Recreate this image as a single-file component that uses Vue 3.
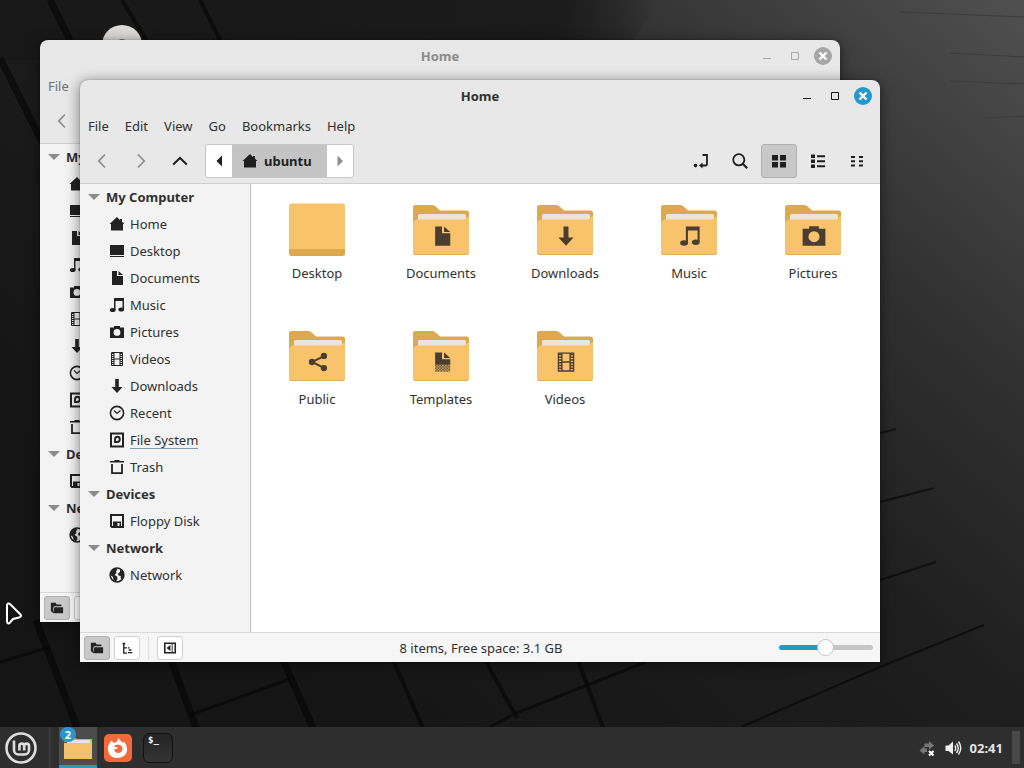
<script setup>
import { ref } from 'vue';

// open file manager windows, the last one has the focus
const windows = ref([
    { id: 1, top: 40, left: 40, right: 184, bottom: 146, active: false },
    { id: 2, top: 80, left: 80, right: 144, bottom: 106, active: true }
]);

const zoomLevel = ref(49);

const menus = ['File', 'Edit', 'View', 'Go', 'Bookmarks', 'Help'];

const places = [
    {
        title: 'My Computer',
        items: [
            { label: 'Home', icon: 'home' },
            { label: 'Desktop', icon: 'desktop' },
            { label: 'Documents', icon: 'document' },
            { label: 'Music', icon: 'music' },
            { label: 'Pictures', icon: 'camera' },
            { label: 'Videos', icon: 'film' },
            { label: 'Downloads', icon: 'download' },
            { label: 'Recent', icon: 'clock' },
            { label: 'File System', icon: 'disk', usage: true },
            { label: 'Trash', icon: 'trash' }
        ]
    },
    { title: 'Devices', items: [{ label: 'Floppy Disk', icon: 'floppy' }] },
    { title: 'Network', items: [{ label: 'Network', icon: 'globe' }] }
];

const folders = [
    { label: 'Desktop' },
    { label: 'Documents', emblem: 'document' },
    { label: 'Downloads', emblem: 'download' },
    { label: 'Music', emblem: 'music' },
    { label: 'Pictures', emblem: 'camera' },
    { label: 'Public', emblem: 'share' },
    { label: 'Templates', emblem: 'template' },
    { label: 'Videos', emblem: 'film' }
];

const viewButtons = [
    { icon: 'location', label: 'Toggle location entry' },
    { icon: 'search', label: 'Search' },
    { icon: 'grid', label: 'Icon view', on: true },
    { icon: 'list', label: 'List view' },
    { icon: 'compact', label: 'Compact view' }
];

// symbolic icons, all on a 16x16 grid
const icons = {
    home: '<path d="M8 1 0.5 8H2v6.5h12V8h1.500L13 5.700V3h-2v.9z"/>',
    desktop: '<path d="M1 2h14v10H1zM1 13h14v1H1z"/>',
    document: '<path d="M3 1h5v5h6v9H3z"/><path d="M9.500 1 14 5H9.500z"/>',
    music: '<path d="M5 1h10v11.500h-1.500V4H6.500v9H5z"/><ellipse cx="3.700" cy="13" rx="2.900" ry="2"/><ellipse cx="12.200" cy="12.500" rx="2.800" ry="2"/>',
    camera: '<path fill-rule="evenodd" d="M5 2h6v1.500h4V14H1V3.500h4zM8 5a3.400 3.400 0 1 0 0 6.800A3.400 3.400 0 0 0 8 5z"/>',
    film: '<path fill="none" stroke="currentColor" d="M2.500 1.500h11v13h-11zM5 1.500v13M11 1.500v13M5 8h6"/><path fill="none" stroke="currentColor" stroke-dasharray="1 1" stroke-width="2" d="M4 2v12M12 2v12"/>',
    download: '<path d="M6.200 1h3.600v8H13.500l-5.500 6-5.500-6h3.700z"/>',
    clock: '<g fill="none" stroke="currentColor"><circle cx="8" cy="8" r="6.600" stroke-width="1.600"/><path stroke-width="1.200" d="m5 5.500 3 3 3.500-3"/></g>',
    disk: '<path fill="none" stroke="currentColor" stroke-width="2" d="M2 1.500h12v13H2z"/><path fill="none" stroke="currentColor" stroke-width="1.900" d="M6 11V7.500C6 5.500 7 4.800 8.300 4.800s2.500 1 2.500 2.500-1.200 2.700-2.600 2.700H6"/>',
    trash: '<path d="M1 2h4.500V1h5v1H15v1.500H1z"/><path fill="none" stroke="currentColor" stroke-width="1.800" d="M3 5v9.200h10V5"/>',
    floppy: '<path fill="none" stroke="currentColor" stroke-width="2" d="M2 2h12v12H3l-1-1z"/><path fill-rule="evenodd" d="M4 8.500h8V15H4zM8.500 10v3.500h2V10z"/>',
    globe: '<circle cx="8" cy="8" r="6.900" fill="none" stroke="currentColor" stroke-width="1.500"/><path d="M2 5 5 1.500 8.500 2 7 4.500 7.500 6 5.500 8 8 9.500 8.500 12 7 14.500 4.500 13 4 10 1.500 8zM11 2l3 3 1 4-2.500 3.500-1-2L12 9 9.500 8.500 9 6.500 11 5z"/>',
    share: '<g fill="none" stroke="currentColor" stroke-width="1.500"><path d="m12.500 3.500-9 4.500 9 4.500"/></g><circle cx="12.500" cy="3.400" r="2.400"/><circle cx="3.400" cy="8" r="2.400"/><circle cx="12.500" cy="12.600" r="2.400"/>',
    template: '<path d="M3 1h5v5h6v4H3z"/><path d="M9.500 1 14 5H9.500z"/><path fill="none" stroke="currentColor" stroke-dasharray=".6 .5" d="M3 10.500h11M3.500 11.500H14M3 12.500h11M3.500 13.500H14M3 14.500h11"/>',
    back: '<path fill="none" stroke="currentColor" stroke-width="1.800" d="M11 1.500 4.800 8l6.200 6.500"/>',
    forward: '<path fill="none" stroke="currentColor" stroke-width="1.800" d="M5 1.500 11.200 8 5 14.500"/>',
    up: '<path fill="none" stroke="currentColor" stroke-width="2" d="M1.200 11.500 8 5l6.800 6.500"/>',
    left: '<path d="M11 2.500v11L5.500 8z"/>',
    right: '<path d="M5.500 2.500v11L11 8z"/>',
    location: '<path fill="none" stroke="currentColor" stroke-width="1.800" d="M9.500 2H14v9a1.500 1.500 0 0 1-1.500 1.500H8"/><path d="M9.500 9.500v6L6 12.500z"/><circle cx="2.500" cy="12.600" r="1.800"/>',
    search: '<g fill="none" stroke="currentColor" stroke-width="1.800"><circle cx="6.800" cy="6.800" r="5.600"/><path d="m10.800 10.800 4.400 4.400" stroke-width="2.200"/></g>',
    grid: '<path d="M1 2h6v5.500H1zM9 2h6v5.500H9zM1 9h6v5.500H1zM9 9h6v5.500H9z"/>',
    list: '<path d="M1 1.500h4v3.500H1zM1 6.500h4V10H1zM1 11.500h4V15H1zM7 2.300h8v2H7zM7 7.200h8v2H7zM7 12.200h8v2H7z"/>',
    compact: '<path d="M2 3h4v2H2zM2 7.200h4v2H2zM2 11.500h4v2H2zM10 3h4v2h-4zM10 7.200h4v2h-4zM10 11.500h4v2h-4z"/>',
    folder: '<path d="M1 2h5.500l1 2H13v2H4.500L3.500 9.500V13H2.500L1 11zM5 7h10v7H3.500z"/>',
    tree: '<path d="M3 2h3v2H5v3h3v1.500H5V13h3v1.500H3.500V4H3z"/><path d="M9 7h2v1.500H9zM9 12.500h5V14H9zM10 9.500h3V11h-3z"/>',
    panel: '<path fill="none" stroke="currentColor" stroke-width="1.800" d="M2 2.500h12v11H2z"/><path d="M8.500 4.500v7L4 8zM10 3h1v10h-1z"/>'
};

const emblemSize = { camera: 26, share: 21 };
</script>

<template>
    <div class="desktop">
        <svg class="wallpaper" viewBox="0 0 1024 768" preserveAspectRatio="none" aria-hidden="true">
            <defs>
                <linearGradient id="wall" x1="0.15" y1="0.75" x2="1" y2="0">
                    <stop offset="0" stop-color="#151515" />
                    <stop offset="0.45" stop-color="#1e1e1e" />
                    <stop offset="0.7" stop-color="#303030" />
                    <stop offset="1" stop-color="#505050" />
                </linearGradient>
                <linearGradient id="wallTop" x1="0" y1="0" x2="1" y2="0">
                    <stop offset="0" stop-color="#181818" />
                    <stop offset="0.85" stop-color="#1b1b1b" />
                    <stop offset="1" stop-color="#1b1b1b" stop-opacity="0" />
                </linearGradient>
            </defs>
            <rect width="1024" height="768" fill="url(#wall)" />
            <path d="M0 0h660l-40 60H0z" fill="url(#wallTop)" />
            <g fill="none" stroke="#060606" stroke-opacity="0.65" stroke-width="7">
                <path d="M50 0 70 40M0 58l45 90M36 620l42 110M171 660l26 70M283 660l31 70" />
                <path stroke-width="4" d="M122 0 146 40M200 0l20 40M393 660l31 70M485 660l32 58M578 660l25 68" />
                <path stroke-width="3" d="m190 715 100-36M490 727l26-14 130-51M0 662l50-15" />
                <path stroke-width="2" d="m741 727 139-60 104-42M880 433l16-4M880 502l54-14M880 580l56-18" />
            </g>
            <path d="M950 53l74 4M900 12l124 5M950 81l74 3M985 118l39-2" fill="none" stroke="#3c3c3c" />
        </svg>

        <svg class="disc" viewBox="0 0 40 40" aria-hidden="true">
            <circle cx="20" cy="20" r="20" fill="#dddcd9" />
            <circle cx="20" cy="20" r="6" fill="#666" />
        </svg>

        <section
            v-for="win in windows"
            :key="win.id"
            class="window"
            :class="{ inactive: !win.active }"
            :style="{ top: win.top + 'px', left: win.left + 'px', right: win.right + 'px', bottom: win.bottom + 'px' }"
        >
            <header class="titlebar">
                <h1 class="title">Home</h1>
                <div class="controls">
                    <button type="button" aria-label="Minimize">
                        <svg viewBox="0 0 20 20"><path d="M6 12.500h8" stroke="currentColor" /></svg>
                    </button>
                    <button type="button" aria-label="Maximize">
                        <svg viewBox="0 0 20 20"><path d="M6.500 6.500h7v7h-7z" fill="none" stroke="currentColor" /></svg>
                    </button>
                    <button type="button" aria-label="Close">
                        <svg viewBox="0 0 20 20">
                            <circle class="close-disc" cx="10" cy="10" r="9" />
                            <path d="m6.500 6.500 7 7m0-7-7 7" stroke="#fff" stroke-width="2.400" />
                        </svg>
                    </button>
                </div>
            </header>

            <!-- the inactive window is covered from here on, apart from its left edge -->
            <nav class="menubar">
                <button v-for="menu in win.active ? menus : menus.slice(0, 1)" :key="menu" type="button">{{ menu }}</button>
            </nav>

            <div class="toolbar">
                <button class="tool dim" type="button" aria-label="Back"><svg viewBox="0 0 16 16" v-html="icons.back"></svg></button>
                <template v-if="win.active">
                    <button class="tool dim" type="button" aria-label="Forward"><svg viewBox="0 0 16 16" v-html="icons.forward"></svg></button>
                    <button class="tool" type="button" aria-label="Up"><svg viewBox="0 0 16 16" v-html="icons.up"></svg></button>
                    <div class="pathbar">
                        <button class="step" type="button" aria-label="Previous"><svg viewBox="0 0 16 16" v-html="icons.left"></svg></button>
                        <button class="crumb" type="button">
                            <svg viewBox="0 0 16 16" v-html="icons.home"></svg>
                            <span>ubuntu</span>
                        </button>
                        <button class="step dim" type="button" aria-label="Next"><svg viewBox="0 0 16 16" v-html="icons.right"></svg></button>
                    </div>
                    <div class="views">
                        <button
                            v-for="button in viewButtons"
                            :key="button.icon"
                            class="tool"
                            :class="{ on: button.on }"
                            type="button"
                            :aria-label="button.label"
                        >
                            <svg viewBox="0 0 16 16" v-html="icons[button.icon]"></svg>
                        </button>
                    </div>
                </template>
            </div>

            <div class="content">
                <aside class="sidebar">
                    <div v-for="group in places" :key="group.title">
                        <h2 class="group-title">
                            <svg viewBox="0 0 12 12" aria-hidden="true"><path d="M0 3h12L6 9z" /></svg>
                            <span>{{ win.active ? group.title : group.title.slice(0, 2) }}</span>
                        </h2>
                        <a v-for="item in group.items" :key="item.label" class="place" href="#" :aria-label="item.label">
                            <svg viewBox="0 0 16 16" v-html="icons[item.icon]"></svg>
                            <span v-if="win.active" :class="{ usage: item.usage }">{{ item.label }}</span>
                        </a>
                    </div>
                </aside>

                <main v-if="win.active" class="files">
                    <button v-for="folder in folders" :key="folder.label" class="file" type="button">
                        <svg class="folder" viewBox="0 0 64 64" aria-hidden="true">
                            <template v-if="folder.emblem">
                                <path d="M4 10.500a2.500 2.500 0 0 1 2.500-2.500H23c2 0 3 .8 4.200 2L31 13.500h26.500A2.500 2.500 0 0 1 60 16v12H4z" fill="#dca850" />
                                <path d="M9 18.500A1.500 1.500 0 0 1 10.500 17h45a1.500 1.500 0 0 1 1.500 1.500V28H9z" fill="#ece3da" />
                                <path d="M4 27c0-3 2-4.500 5-4.500h46c2 0 2-3 5-3V55.500a2.500 2.500 0 0 1-2.500 2.500h-51A2.500 2.500 0 0 1 4 55.500z" fill="#f8c36b" />
                                <path d="M4 54.500v1A2.500 2.500 0 0 0 6.500 58h51a2.500 2.500 0 0 0 2.500-2.500v-1a2.500 2.500 0 0 1-2.500 2.500h-51A2.500 2.500 0 0 1 4 54.500z" fill="#e3b05a" />
                                <svg
                                    class="emblem"
                                    :x="33 - (emblemSize[folder.emblem] || 22) / 2"
                                    :y="39 - (emblemSize[folder.emblem] || 22) / 2"
                                    :width="emblemSize[folder.emblem] || 22"
                                    :height="emblemSize[folder.emblem] || 22"
                                    viewBox="0 0 16 16"
                                    v-html="icons[folder.emblem]"
                                ></svg>
                            </template>
                            <template v-else>
                                <rect x="4" y="8" width="56" height="51" rx="2.500" fill="#dca850" />
                                <path d="M4 9a2.500 2.500 0 0 1 2.500-2.500h51A2.500 2.500 0 0 1 60 9v43H4z" fill="#f8c36b" />
                            </template>
                        </svg>
                        <span>{{ folder.label }}</span>
                    </button>
                </main>
            </div>

            <footer class="statusbar">
                <div class="panes">
                    <button class="on" type="button" aria-label="Show places"><svg viewBox="0 0 16 16" v-html="icons.folder"></svg></button>
                    <button type="button" aria-label="Show tree"><svg viewBox="0 0 16 16" v-html="icons.tree"></svg></button>
                    <span class="divider"></span>
                    <button type="button" aria-label="Hide sidebar"><svg viewBox="0 0 16 16" v-html="icons.panel"></svg></button>
                </div>
                <template v-if="win.active">
                    <p class="status">8 items, Free space: 3.1 GB</p>
                    <input
                        v-model="zoomLevel"
                        class="zoom"
                        type="range"
                        min="0"
                        max="100"
                        aria-label="Icon size"
                        :style="{ '--fill': zoomLevel + '%' }"
                    />
                </template>
            </footer>
        </section>

        <svg class="cursor" viewBox="0 0 18 24" aria-hidden="true">
            <path d="M2 3.500v16c0 2 1.500 2.500 3 1l3-3.500 6-1.500c2.500-.6 2.500-2 1-3.500L5 2C3.500.8 2 1.500 2 3.500z" />
        </svg>

        <div class="panel">
            <button class="menu" type="button" aria-label="Menu">
                <svg viewBox="0 0 32 32">
                    <circle cx="16" cy="16" r="14.500" />
                    <path d="M9 8.500V18a4.500 4.500 0 0 0 4.500 4.500h6A4.500 4.500 0 0 0 24 18v-4a2.400 2.400 0 0 0-4.800 0v4.500M19.200 14a2.400 2.400 0 0 0-4.800 0v4.500" />
                </svg>
            </button>
            <span class="separator"></span>
            <button class="task open" type="button" aria-label="Files">
                <svg viewBox="0 0 28 28">
                    <path d="M0 8V3h10l3 2h15v4z" fill="#dca850" />
                    <path d="M3 6h23v4H3z" fill="#ece3da" />
                    <path d="M0 9h25l3-2v18H0z" fill="#f5c06a" />
                </svg>
                <span class="badge">2</span>
            </button>
            <button class="task" type="button" aria-label="Firefox">
                <svg viewBox="0 0 28 28">
                    <rect width="28" height="28" rx="5" fill="#f4693a" />
                    <path d="M7.500 6.500 10 9l3-1.500L14.500 3.500c.5 2.500 3 3.500 4.500 5.500l1-1.500c4 5 4 11 .5 14s-10 3.500-13.500.5S2.500 12 6.500 8z" fill="#fff" />
                    <path d="M14 10.500c-2 0-3.500 1-4 2l4 1.200c-.5 1.500-3 1-4 2 1 3 4.500 4.300 7 2.300s1.500-5.500 0-6.500z" fill="#f4693a" />
                </svg>
            </button>
            <button class="task" type="button" aria-label="Terminal">
                <span class="terminal">$_</span>
            </button>
            <div class="tray">
                <svg viewBox="0 0 18 18" aria-hidden="true">
                    <path d="M6.500 4.500H11V2l5 4.500-5 4V8H6.500zM9 9.500H6.500V7l-5 4.500 5 4V13H9z" fill="#777" />
                    <path d="m11 12 4.500 4.500m0-4.500L11 16.500" stroke="#fff" stroke-width="2" />
                </svg>
                <svg viewBox="0 0 18 18" aria-hidden="true">
                    <path d="M1.500 6.500h3L9 2.500v13L4.500 12h-3z" fill="#f0f0f0" />
                    <path d="M10.800 6.500q1.800 2.500 0 5.500M12.500 4.500q3.500 4.500 0 9.500M14.500 2.500q4.500 6.500 0 13" fill="none" stroke="#f0f0f0" stroke-width="1.400" />
                </svg>
                <time>02:41</time>
            </div>
            <button class="show-desktop" type="button" aria-label="Show desktop"></button>
        </div>
    </div>
</template>

<style>
body {
    margin: 0;
    background-color: #171717;
}
</style>

<style scoped>
.desktop {
    position: relative;
    display: flex;
    flex-direction: column;
    justify-content: flex-end;
    height: 100vh;
    overflow: hidden;
    font-family: "Noto Sans", "Open Sans", sans-serif;
    font-size: 13px;
    line-height: 18px;
    color: #303030;
}

.desktop * {
    box-sizing: border-box;
}

button {
    padding: 0;
    border: 0;
    background: none;
    font: inherit;
    color: inherit;
}

svg {
    display: block;
    fill: currentColor;
}

.wallpaper {
    position: absolute;
    inset: 0;
    width: 100%;
    height: 100%;
}

.disc {
    position: absolute;
    top: 25px;
    left: 102px;
    width: 40px;
    height: 40px;
}

.cursor {
    position: absolute;
    top: 602px;
    left: 5px;
    width: 18px;
    height: 24px;
    fill: #111;
    stroke: #fff;
    stroke-width: 2px;
}

/* window */
.window {
    position: absolute;
    display: flex;
    flex-direction: column;
    overflow: hidden;
    border-radius: 8px 8px 0 0;
    background-color: #e8e8e8;
    box-shadow: 0 0 1px rgba(0, 0, 0, 0.6), 0 2px 14px rgba(0, 0, 0, 0.5);
}

.titlebar {
    position: relative;
    display: flex;
    align-items: center;
    justify-content: center;
    height: 32px;
}

.title {
    margin: 0;
    font-size: 13px;
    font-weight: 700;
}

.controls {
    position: absolute;
    right: 7px;
    display: flex;
    gap: 8px;
    color: #1a1a1a;
}

.controls svg {
    width: 20px;
    height: 20px;
}

.close-disc {
    fill: #2199cc;
}

.menubar {
    display: flex;
    height: 28px;
}

.menubar button {
    padding: 0 8px;
}

.toolbar {
    display: flex;
    align-items: center;
    gap: 3px;
    height: 44px;
    padding: 0 5px 2px 4px;
    border-bottom: 1px solid #cfcfcf;
    color: #1f1f1f;
}

.tool {
    display: flex;
    align-items: center;
    justify-content: center;
    width: 36px;
    height: 34px;
    border-radius: 3px;
}

.tool svg,
.step svg,
.crumb svg {
    width: 16px;
    height: 16px;
}

.dim {
    color: #8f8f8f;
}

.on {
    border: 1px solid #b0b0b0;
    background-color: #c8c8c8;
}

.pathbar {
    display: flex;
    height: 34px;
    margin-left: 4px;
    border: 1px solid #c6c6c6;
    border-radius: 3px;
    background-color: #fff;
}

.step {
    display: flex;
    align-items: center;
    justify-content: center;
    width: 26px;
}

.crumb {
    display: flex;
    align-items: center;
    gap: 6px;
    padding: 0 15px 0 10px;
    background-color: #c4c4c4;
    font-weight: 700;
}

.views {
    display: flex;
    gap: 3px;
    margin-left: auto;
}

.content {
    display: flex;
    flex: 1;
    min-height: 0;
}

.sidebar {
    width: 171px;
    border-right: 1px solid #c2c2c2;
    background-color: #f3f3f3;
}

.group-title,
.place {
    display: flex;
    align-items: center;
    height: 27px;
    padding-bottom: 2px;
}

.group-title {
    gap: 6px;
    margin: 0;
    padding-left: 8px;
    font-size: 13px;
    font-weight: 700;
}

.group-title svg {
    width: 12px;
    height: 12px;
    color: #8c8c8c;
}

.place {
    gap: 5px;
    padding-left: 29px;
    color: #303030;
    text-decoration: none;
}

.place svg {
    width: 16px;
    height: 16px;
    color: #222;
}

.usage {
    box-shadow: 0 1px 0 #84a0b0;
    line-height: 16px;
}

.files {
    display: grid;
    flex: 1;
    grid-template-columns: repeat(auto-fill, 124px);
    grid-auto-rows: 126px;
    align-content: start;
    padding: 13px 0 0 4px;
    background-color: #fff;
}

.file {
    display: flex;
    flex-direction: column;
    align-items: center;
    gap: 3px;
}

.folder {
    width: 64px;
    height: 64px;
}

.emblem {
    color: #4a3e33;
}

.statusbar {
    display: flex;
    align-items: center;
    height: 30px;
    padding: 0 7px 0 4px;
    border-top: 1px solid #d8d8d8;
    background-color: #f6f6f6;
}

.panes {
    display: flex;
    gap: 4px;
}

.panes button {
    display: flex;
    align-items: center;
    justify-content: center;
    width: 26px;
    height: 24px;
    border: 1px solid #d0d0d0;
    border-radius: 3px;
    background-color: #fff;
    color: #222;
}

.panes button.on {
    border-color: #b0b0b0;
    background-color: #c8c8c8;
}

.panes svg {
    width: 14px;
    height: 14px;
}

.divider {
    width: 1px;
    margin: 0 4px;
    background-color: #e0e0e0;
}

.status {
    flex: 1;
    margin: 0;
    text-align: center;
}

.zoom {
    width: 94px;
    height: 18px;
    margin: 0;
    background: none;
    appearance: none;
}

.zoom::-webkit-slider-runnable-track {
    height: 5px;
    border-radius: 3px;
    background: linear-gradient(to right, #2199d6 var(--fill), #c6c6c6 var(--fill));
}

.zoom::-webkit-slider-thumb {
    width: 17px;
    height: 17px;
    margin-top: -6px;
    border: 1px solid #c4c4c4;
    border-radius: 50%;
    background-color: #fff;
    appearance: none;
}

/* window without focus */
.inactive .title {
    color: #8a8a8a;
}

.inactive .controls {
    color: #a8a8a8;
}

.inactive .close-disc {
    fill: #a6a6a6;
}

.inactive .menubar {
    color: #707070;
}

/* bottom panel */
.panel {
    position: relative;
    display: flex;
    align-items: stretch;
    height: 41px;
    padding-right: 4px;
    background-color: #2e2e2e;
    color: #fff;
}

.menu {
    display: flex;
    align-items: center;
    padding: 0 12px 0 5px;
}

.menu svg {
    width: 32px;
    height: 32px;
    fill: none;
    stroke: #dedede;
    stroke-width: 2.6px;
}

.separator {
    width: 2px;
    margin-right: 8px;
    background-color: #3a3a3a;
}

.task {
    position: relative;
    display: flex;
    align-items: center;
    justify-content: center;
    width: 40px;
}

.task svg {
    width: 28px;
    height: 28px;
}

.open {
    width: 38px;
    margin-right: 1px;
    border-bottom: 3px solid #2a96d0;
    background-color: #4c4c4c;
}

.open svg {
    margin-top: 4px;
}

.badge {
    position: absolute;
    top: 0;
    left: 1px;
    width: 16px;
    height: 15px;
    border-radius: 8px;
    background-color: #2a96d0;
    font-size: 11px;
    font-weight: 700;
    line-height: 15px;
    text-align: center;
}

.terminal {
    width: 30px;
    height: 30px;
    padding-left: 4px;
    border: 1px solid #121212;
    border-radius: 6px;
    background: linear-gradient(#242424, #343434);
    font-family: "DejaVu Sans Mono", monospace;
    font-size: 9px;
    font-weight: 700;
    line-height: 13px;
    text-align: left;
}

.tray {
    display: flex;
    align-items: center;
    gap: 8px;
    margin-left: auto;
    margin-right: 9px;
    font-weight: 700;
    color: #e4e4e4;
}

.tray svg {
    width: 18px;
    height: 18px;
}

.show-desktop {
    width: 8px;
    margin: 4px 0;
    background-color: #484848;
}
</style>
